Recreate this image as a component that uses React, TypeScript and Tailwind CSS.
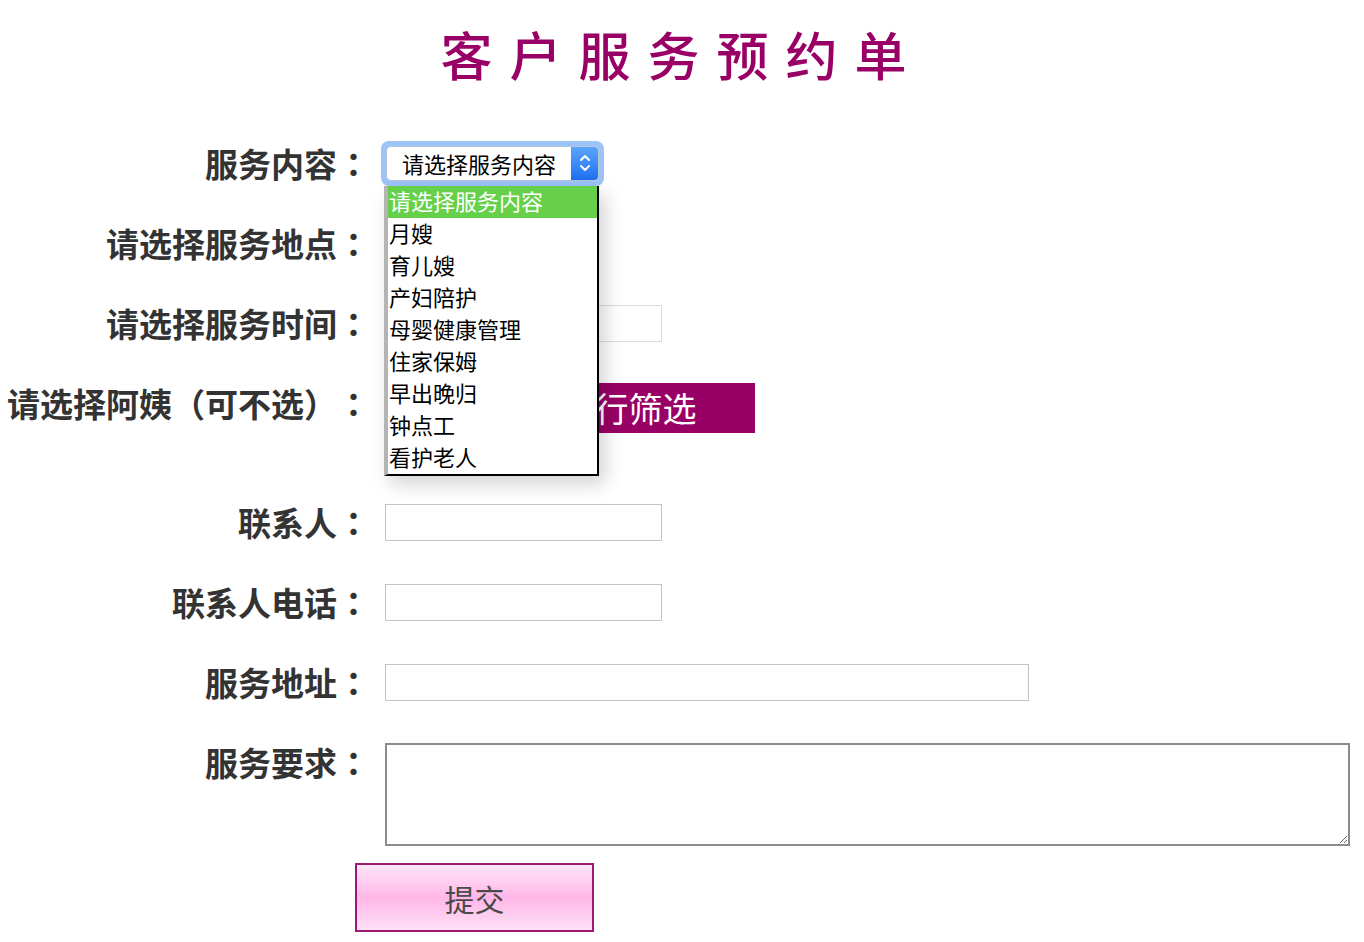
import React from "react";

const FONT = { fontFamily: '"Noto Sans CJK SC", "Noto Sans", sans-serif' };

const OPTIONS = ["请选择服务内容", "月嫂", "育儿嫂", "产妇陪护", "母婴健康管理", "住家保姆", "早出晚归", "钟点工", "看护老人"];

function Label({ children }: { children: React.ReactNode }) {
  return (
    <div
      className="w-[370px] shrink-0 text-right text-[33px] font-bold leading-none text-[#333] [text-spacing-trim:space-all]"
      style={{ fontFamily: '"Noto Sans CJK TC", "Noto Sans CJK SC", sans-serif' }}
    >
      {children}
    </div>
  );
}

function FakeSelect() {
  return (
    <div className="relative">
      <div className="ml-[-4px] w-[223px] h-[45px] rounded-[8px] bg-[#9cc4f7] p-[5px]">
        <div className="flex h-full rounded-[5px] bg-white border border-[#b8c8dc] overflow-hidden">
          <div className="flex-1 flex items-center pl-[15px] text-[22px] text-black leading-none">请选择服务内容</div>
          <div className="w-[27px] flex items-center justify-center bg-gradient-to-b from-[#5aa5fa] to-[#1d6ff0]">
            <svg width="12" height="20" viewBox="0 0 12 20" fill="none" stroke="white" strokeWidth="2" strokeLinecap="round" strokeLinejoin="round">
              <path d="M2 7 L6 3 L10 7" />
              <path d="M2 13 L6 17 L10 13" />
            </svg>
          </div>
        </div>
      </div>
      <div className="absolute left-[-1px] top-[45px] z-10 w-[215px] bg-white border-l-[4px] border-l-[#b4b4b4] border-r-2 border-r-black border-b-2 border-b-black shadow-[6px_8px_18px_rgba(0,0,0,0.18)]">
        {OPTIONS.map((o, i) => (
          <div
            key={o}
            className={`h-[32px] flex items-center pl-[1px] pb-[3px] text-[22px] leading-none ${i === 0 ? "bg-[#66d04b] text-white" : "text-black"}`}
          >
            {o}
          </div>
        ))}
      </div>
    </div>
  );
}

export default function App() {
  return (
    <div className="w-[1364px] h-[942px] bg-white overflow-hidden" style={FONT}>
      <div className="h-[123px] flex items-center justify-center">
        <h1 className="text-[52px] leading-none text-[#990066] font-medium tracking-[17px] mt-[-16px]">客户服务预约单</h1>
      </div>

      <div className="flex items-center h-[80px]">
        <Label>服务内容：</Label>
        <div className="ml-[15px]">
          <FakeSelect />
        </div>
      </div>

      <div className="flex items-center h-[80px]">
        <Label>请选择服务地点：</Label>
      </div>

      <div className="flex items-center h-[80px]">
        <Label>请选择服务时间：</Label>
        <input className="ml-[15px] w-[277px] h-[37px] border border-[#dcdcdc] outline-none" />
      </div>

      <div className="flex items-center h-[80px]">
        <Label>请选择阿姨（可不选）：</Label>
        <button className="ml-[108px] mt-[9px] w-[277px] h-[50px] pl-[24px] bg-[#990066] text-white text-[34px] leading-none">
          进行筛选
        </button>
      </div>

      <div className="h-[39px]" />

      <div className="flex items-center h-[80px]">
        <Label>联系人：</Label>
        <input className="ml-[15px] w-[277px] h-[37px] border border-[#c4c4c4] outline-none" />
      </div>

      <div className="flex items-center h-[80px]">
        <Label>联系人电话：</Label>
        <input className="ml-[15px] w-[277px] h-[37px] border border-[#c4c4c4] outline-none" />
      </div>

      <div className="flex items-center h-[80px]">
        <Label>服务地址：</Label>
        <input className="ml-[15px] w-[644px] h-[37px] border border-[#c4c4c4] outline-none" />
      </div>

      <div className="flex items-start pt-[21px]">
        <div className="pt-[3px]">
          <Label>服务要求：</Label>
        </div>
        <textarea className="ml-[15px] w-[965px] h-[103px] border-2 border-[#8c8c8c] outline-none resize" />
      </div>

      <div className="pl-[355px] pt-[17px]">
        <button className="w-[239px] h-[69px] border-2 border-[#9c1a72] bg-gradient-to-b from-[#fde6f7] via-[#ffb6e8] to-[#fde0f5] text-[30px] text-[#4a4a4a] leading-none">
          提交
        </button>
      </div>
    </div>
  );
}
